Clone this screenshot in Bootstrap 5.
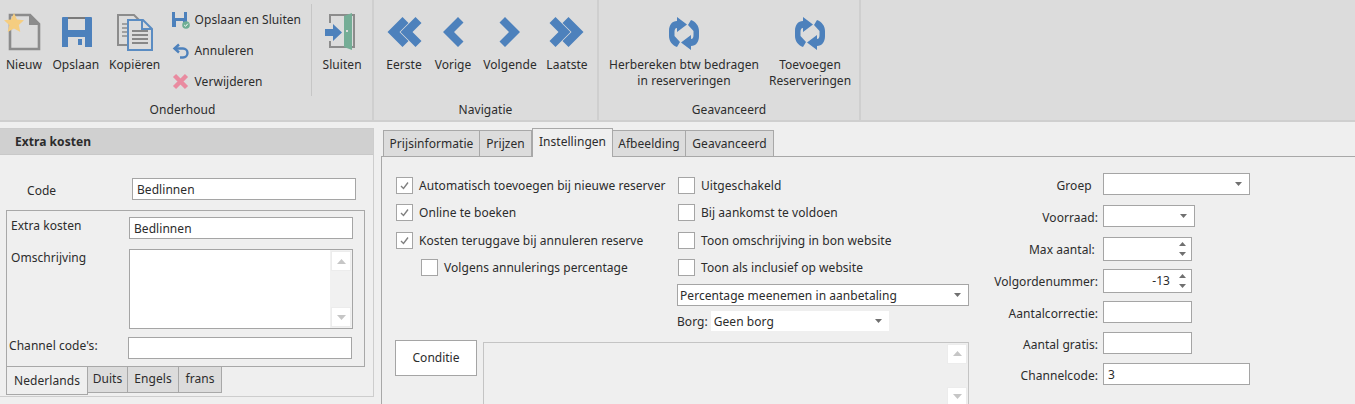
<!DOCTYPE html>
<html lang="nl">
<head>
<meta charset="UTF-8">
<title>Extra kosten</title>
<link href="https://cdn.jsdelivr.net/npm/bootstrap@5.3.3/dist/css/bootstrap.min.css" rel="stylesheet">
<style>
html, body { height: 404px; overflow: hidden; }
body { background: #efefef; color: #2c2c2c; font: 12px/16px "Noto Sans", "Liberation Sans", sans-serif; letter-spacing: .05px; }

/* ribbon */
.ribbon { height: 122px; background: #dcdcdc; border-bottom: 2px solid #cfcfcf; }
.rb-group { border-right: 2px solid #cfcfcf; }
.rb-items { height: 100px; }
.rb-title { height: 20px; line-height: 20px; text-align: center; }
.rb-onderhoud { padding-right: 7px; }
.rb-btn { height: 96px; text-align: center; white-space: nowrap; }
.rb-icon { height: 57px; }
.rb-stack { width: 146px; margin: 4px 0 0 10px; }
.rb-row { height: 31px; gap: 5px; }
.rb-sep { width: 1px; height: 92px; margin: 4px 0 0 -6px; background: #c6c6c6; }
.w-new { width: 48px; }
.w-save { width: 56px; }
.w-copy { width: 54px; margin-left: 4px; }
.w-close { width: 60px; }
.w-first { width: 44px; }
.w-prev { width: 54px; }
.w-next { width: 60px; }
.w-last { width: 54px; }
.w-calc { width: 170px; }
.w-add { width: 82px; }
.g-one { width: 374px; }
.g-two { width: 225px; }
.g-three { width: 262px; }

/* left panel */
.side { width: 374px; height: 269px; margin-top: 6px; border: 1px solid #cdcdcd; border-left: 0; }
.side-head { height: 26px; line-height: 25px; padding-left: 15px; background: #d0d0d0; border-bottom: 1px solid #c8c8c8; font-weight: 700; }
.fld { height: 22px; width: 224px; padding: 0 4px; border: 1px solid #a5a5a5; border-radius: 0; background: #fff; color: #2c2c2c; font-size: 12px; line-height: 20px; min-height: 0; letter-spacing: .05px; }
.code-row { margin-top: 23px; height: 22px; padding-left: 27px; }
.code-row label { width: 105px; line-height: 26px; }
.gbox { width: 359px; height: 157px; margin: 10px 0 0 6px; border: 1px solid #a8a8a8; padding: 6px 0 0 4px; }
.gbox label { width: 118px; }
.lbl-extra { padding-top: 1px; }
.lbl-memo { margin-top: 11px; }
.lbl-chan { margin-left: -2px; width: 119px !important; line-height: 18px; }
.memo { height: 80px; width: 224px; border: 1px solid #a5a5a5; background: #fff; margin-top: 10px; }
.sbar { width: 22px; background: #f1f1f1; padding: 1px; }
.sbar-btn { height: 20px; background: #fff; border: 1px solid #ececec; }
.lang-tabs { margin-left: 6px; border: 0; }
.lang-tabs .nav-link { height: 26px; width: 40px; padding: 0; text-align: center; line-height: 24px; color: #2c2c2c; background: #dcdcdc; border: 1px solid #a8a8a8; border-top: 0; border-left: 0; border-radius: 0; margin: 0; font-size: 12px; }
.lang-tabs .nav-item:nth-child(3) .nav-link { width: 51px; }
.lang-tabs .nav-item:nth-child(4) .nav-link { width: 43px; }
.lang-tabs .nav-link.active { height: 28px; width: 82px; background: #efefef; border: 1px solid #a8a8a8; border-top: 0; line-height: 27px; color: #2c2c2c; }

/* right panel */
.mainp { margin: 8px 0 0 7px; flex: 1; }
.main-tabs { height: 26px; padding-left: 2px; border: 0; }
.main-tabs .nav-link { height: 26px; margin: 0; padding: 0; text-align: center; line-height: 26px; color: #2c2c2c; font-size: 12px; background: #dcdcdc; border: 1px solid #a8a8a8; border-left: 0; border-bottom: 0; border-radius: 0; }
.main-tabs .nav-item:nth-child(1) .nav-link { width: 97px; border-left: 1px solid #a8a8a8; }
.main-tabs .nav-item:nth-child(2) .nav-link { width: 52px; }
.main-tabs .nav-item:nth-child(3) .nav-link { width: 81px; }
.main-tabs .nav-item:nth-child(4) .nav-link { width: 73px; }
.main-tabs .nav-item:nth-child(5) .nav-link { width: 88px; }
.main-tabs .nav-link.active { height: 29px; margin-top: -2px; background: #efefef; color: #2c2c2c; border: 1px solid #a8a8a8; border-bottom: 0; position: relative; z-index: 1; }
.page { height: 250px; border-top: 1px solid #a8a8a8; border-left: 1px solid #a8a8a8; padding: 20px 0 0 14px; }
.c-left { width: 574px; }
.c-one { width: 282px; }
.c-two { width: 292px; }
.chk { height: 27.4px; gap: 6px; white-space: nowrap; }
.chk span { margin-top: 1px; }
.chk .form-check-input { width: 17px; height: 17px; margin: 0; flex: none; border: 1px solid #a5a5a5; border-radius: 0; background-color: #fff; box-shadow: none; }
.chk .form-check-input:checked { background-color: #fff; border-color: #a5a5a5; background-size: 13px; background-image: url("data:image/svg+xml,%3Csvg xmlns='http://www.w3.org/2000/svg' viewBox='0 0 13 13'%3E%3Cpath d='M3 7l2.500 2.500L10 3.500' fill='none' stroke='%23808080' stroke-width='1.400'/%3E%3C/svg%3E"); }
.chk-sub { padding-left: 25px; }
.pick { height: 22px; min-height: 0; padding: 2px 2px 0; border: 1px solid #a5a5a5; border-radius: 0; color: #2c2c2c; font-size: 12px; line-height: 18px; letter-spacing: .05px; background-position: right 0 center; background-size: 20px 8px; background-image: url("data:image/svg+xml,%3Csvg xmlns='http://www.w3.org/2000/svg' viewBox='0 0 20 8'%3E%3Cpath d='M6 2h7l-3.500 4z' fill='%23707070'/%3E%3C/svg%3E"); box-shadow: none; }
.pick-wide { width: 292px; margin: -3px 0 0 -1px; }
.borg { margin: 5px 0 0 -1px; height: 20px; gap: 3px; }
.borg span { padding-top: 2px; }
.pick-flat { width: 178px; height: 20px; border: 0; padding-left: 3px; }
.cond-row { margin-top: 9px; }
.cond-btn { width: 82px; height: 36px; margin-left: -1px; padding: 0; background: #fff; color: #2c2c2c; font-size: 12px; border: 1px solid #a5a5a5; border-radius: 0; }
.cond-box { width: 486px; height: 67px; margin: 2px 0 0 6px; border: 1px solid #c4c4c4; }
.cond-box .sbar { background: transparent; }
.c-three { margin: -4px 0 0 18px; }
.rowf { margin-bottom: 10px; }
.rowf label { width: 110px; height: 22px; margin-right: 5px; text-align: right; white-space: nowrap; line-height: 26px; }
.rowf-8 { margin-bottom: 8px; }
.rowf-9 { margin-bottom: 9px; }
.w-a { width: 147px; }
.w-b { width: 92px; }
.w-c { width: 89px; }
.spin { height: 24px; width: 89px; background: #fff; border: 1px solid #a5a5a5; padding-right: 4px; line-height: 22px; text-align: right; }
.spin svg { margin-left: 8px; }
</style>
</head>
<body>

<!-- ribbon -->
<div class="ribbon d-flex">
  <div class="rb-group g-one">
    <div class="rb-items d-flex">
      <div class="rb-btn w-new d-flex flex-column align-items-center">
        <div class="rb-icon">
          <svg width="40" height="57" viewBox="0 0 40 57"><path d="M6 15h20l9 9v25H6z" fill="none" stroke="#8c8c8c" stroke-width="2.600"/><path d="M25 14v11h10z" fill="#8c8c8c"/><path d="M10 13l3 6.500 7 .8-5.200 4.700 1.500 7-6.300-3.600-6.300 3.600 1.500-7L0 20.300l7-.8z" fill="#f5cd80"/></svg>
        </div>
        <span>Nieuw</span>
      </div>
      <div class="rb-btn w-save d-flex flex-column align-items-center">
        <div class="rb-icon">
          <svg width="34" height="57" viewBox="0 0 34 57"><path d="M3 18a1 1 0 0 1 1-1h28a1 1 0 0 1 1 1v29H3z" fill="#4d81bc"/><path d="M9 17h17v13H9z" fill="#dcdcdc"/><path d="M9 17h17v2H9z" fill="#7a7a7a"/><path d="M9 37h17v10H9z" fill="#dcdcdc"/><path d="M19 39h4v6h-4z" fill="#4d81bc"/></svg>
        </div>
        <span>Opslaan</span>
      </div>
      <div class="rb-btn w-copy d-flex flex-column align-items-center">
        <div class="rb-icon">
          <svg width="38" height="57" viewBox="0 0 38 57"><path d="M2 15h16l6 6v24H2z" fill="none" stroke="#8c8c8c" stroke-width="2"/><path d="M6 24h10M6 28h10M6 32h10M6 36h10" stroke="#8c8c8c" stroke-width="1.500"/><path d="M12 20h15l9 9v21H12z" fill="#dcdcdc" stroke="#5b8cc2" stroke-width="2"/><path d="M26 20v9h10" fill="none" stroke="#5b8cc2" stroke-width="2"/><path d="M16 31h16M16 35h16M16 39h16M16 43h16" stroke="#6b6b6b" stroke-width="1.500"/></svg>
        </div>
        <span>Kopiëren</span>
      </div>
      <div class="rb-stack">
        <div class="rb-row d-flex align-items-center">
          <svg width="18" height="18" viewBox="0 0 18 18"><path d="M0 1h15v15H0z" fill="#4d81bc"/><path d="M3 1h9v6H3z" fill="#dcdcdc"/><path d="M4 10h7v6H4z" fill="#dcdcdc"/><circle cx="14" cy="14" r="3.800" fill="#6fae94"/><path d="M12.200 14l1.300 1.300 2.300-2.600" fill="none" stroke="#fff" stroke-width="1"/></svg>
          <span>Opslaan en Sluiten</span>
        </div>
        <div class="rb-row d-flex align-items-center">
          <svg width="18" height="18" viewBox="0 0 18 18"><path d="M7 2.500L2.500 6.500 7 10.500" fill="none" stroke="#4d81bc" stroke-width="2.400"/><path d="M3 6.500h8a4.500 4.500 0 0 1 0 9H8" fill="none" stroke="#4d81bc" stroke-width="2.400"/></svg>
          <span>Annuleren</span>
        </div>
        <div class="rb-row d-flex align-items-center">
          <svg width="18" height="18" viewBox="0 0 18 18"><path d="M2.500 2.500l12 12M14.500 2.500l-12 12" fill="none" stroke="#e98ba0" stroke-width="4.400"/></svg>
          <span>Verwijderen</span>
        </div>
      </div>
      <div class="rb-sep"></div>
      <div class="rb-btn w-close d-flex flex-column align-items-center">
        <div class="rb-icon">
          <svg width="34" height="57" viewBox="0 0 34 57"><path d="M5 23v-8h24v32H5v-6" fill="none" stroke="#8c8c8c" stroke-width="2"/><path d="M19 16l8-3v37l-8-3z" fill="#75ad96"/><path d="M21 30h2v2h-2z" fill="#dcdcdc"/><path d="M0 29h8v-5l9 8.500-9 8.500v-5H0z" fill="#4d81bc"/></svg>
        </div>
        <span>Sluiten</span>
      </div>
    </div>
    <div class="rb-title rb-onderhoud">Onderhoud</div>
  </div>

  <div class="rb-group g-two">
    <div class="rb-items d-flex ps-2">
      <div class="rb-btn w-first d-flex flex-column align-items-center">
        <div class="rb-icon"><svg width="36" height="57" viewBox="0 0 36 57"><path d="M1.500 32l15-15 6 6-9 9 9 9-6 6zM14.500 32l15-15 6 6-9 9 9 9-6 6z" fill="#4d81bc"/></svg></div>
        <span>Eerste</span>
      </div>
      <div class="rb-btn w-prev d-flex flex-column align-items-center">
        <div class="rb-icon"><svg width="22" height="57" viewBox="0 0 22 57"><path d="M1 32l15-15 5.500 5.500-9.500 9.500 9.500 9.500L16 47z" fill="#4d81bc"/></svg></div>
        <span>Vorige</span>
      </div>
      <div class="rb-btn w-next d-flex flex-column align-items-center">
        <div class="rb-icon"><svg width="22" height="57" viewBox="0 0 22 57"><path d="M21 32L6 17 .5 22.500 10 32 .5 41.500 6 47z" fill="#4d81bc"/></svg></div>
        <span>Volgende</span>
      </div>
      <div class="rb-btn w-last d-flex flex-column align-items-center">
        <div class="rb-icon"><svg width="36" height="57" viewBox="0 0 36 57"><path d="M34.500 32l-15-15-6 6 9 9-9 9 6 6zM21.500 32l-15-15-6 6 9 9-9 9 6 6z" fill="#4d81bc"/></svg></div>
        <span>Laatste</span>
      </div>
    </div>
    <div class="rb-title">Navigatie</div>
  </div>

  <div class="rb-group g-three">
    <div class="rb-items d-flex">
      <div class="rb-btn w-calc d-flex flex-column align-items-center">
        <div class="rb-icon"><svg width="30" height="57" viewBox="0 0 30 57"><path id="rf" d="M8 17l10 7.500L8 32v-4c-2 0-2.500 2-2.500 4v4l5.500 6-3 5c-5-2-8-6-8-11v-5c0-6 3-10 8-10z" fill="#4d81bc"/><use href="#rf" transform="rotate(180 15 33.500)"/></svg></div>
        <span>Herbereken btw bedragen<br>in reserveringen</span>
      </div>
      <div class="rb-btn w-add d-flex flex-column align-items-center">
        <div class="rb-icon"><svg width="30" height="57" viewBox="0 0 30 57"><use href="#rf"/><use href="#rf" transform="rotate(180 15 33.500)"/></svg></div>
        <span>Toevoegen<br>Reserveringen</span>
      </div>
    </div>
    <div class="rb-title">Geavanceerd</div>
  </div>
</div>

<div class="d-flex">
  <!-- left panel -->
  <div class="side">
    <div class="side-head">Extra kosten</div>
    <div class="code-row d-flex">
      <label>Code</label>
      <input class="fld" type="text" value="Bedlinnen">
    </div>
    <div class="gbox">
      <div class="d-flex">
        <label class="lbl-extra">Extra kosten</label>
        <input class="fld" type="text" value="Bedlinnen">
      </div>
      <div class="d-flex">
        <label class="lbl-memo">Omschrijving</label>
        <div class="memo d-flex justify-content-end">
          <div class="sbar d-flex flex-column justify-content-between">
            <div class="sbar-btn d-flex align-items-center justify-content-center"><svg width="9" height="5" viewBox="0 0 9 5"><path d="M4.500 0L9 5H0z" fill="#c6c6c6"/></svg></div>
            <div class="sbar-btn d-flex align-items-center justify-content-center"><svg width="9" height="5" viewBox="0 0 9 5"><path d="M4.500 5L9 0H0z" fill="#c6c6c6"/></svg></div>
          </div>
        </div>
      </div>
      <div class="d-flex mt-2">
        <label class="lbl-chan">Channel code's:</label>
        <input class="fld" type="text">
      </div>
    </div>
    <ul class="nav nav-tabs lang-tabs">
      <li class="nav-item"><a class="nav-link active" href="#">Nederlands</a></li>
      <li class="nav-item"><a class="nav-link" href="#">Duits</a></li>
      <li class="nav-item"><a class="nav-link" href="#">Engels</a></li>
      <li class="nav-item"><a class="nav-link" href="#">frans</a></li>
    </ul>
  </div>

  <!-- right panel -->
  <div class="mainp">
    <ul class="nav nav-tabs main-tabs">
      <li class="nav-item"><a class="nav-link" href="#">Prijsinformatie</a></li>
      <li class="nav-item"><a class="nav-link" href="#">Prijzen</a></li>
      <li class="nav-item"><a class="nav-link active" href="#">Instellingen</a></li>
      <li class="nav-item"><a class="nav-link" href="#">Afbeelding</a></li>
      <li class="nav-item"><a class="nav-link" href="#">Geavanceerd</a></li>
    </ul>
    <div class="page d-flex">
      <div class="c-left">
        <div class="d-flex">
          <div class="c-one">
            <div class="chk d-flex align-items-start"><input class="form-check-input" type="checkbox" checked><span>Automatisch toevoegen bij nieuwe reserver</span></div>
            <div class="chk d-flex align-items-start"><input class="form-check-input" type="checkbox" checked><span>Online te boeken</span></div>
            <div class="chk d-flex align-items-start"><input class="form-check-input" type="checkbox" checked><span>Kosten teruggave bij annuleren reserve</span></div>
            <div class="chk chk-sub d-flex align-items-start"><input class="form-check-input" type="checkbox"><span>Volgens annulerings percentage</span></div>
          </div>
          <div class="c-two">
            <div class="chk d-flex align-items-start"><input class="form-check-input" type="checkbox"><span>Uitgeschakeld</span></div>
            <div class="chk d-flex align-items-start"><input class="form-check-input" type="checkbox"><span>Bij aankomst te voldoen</span></div>
            <div class="chk d-flex align-items-start"><input class="form-check-input" type="checkbox"><span>Toon omschrijving in bon website</span></div>
            <div class="chk d-flex align-items-start"><input class="form-check-input" type="checkbox"><span>Toon als inclusief op website</span></div>
            <select class="form-select pick pick-wide"><option>Percentage meenemen in aanbetaling</option></select>
            <div class="borg d-flex align-items-center">
              <span>Borg:</span>
              <select class="form-select pick pick-flat"><option>Geen borg</option></select>
            </div>
          </div>
        </div>
        <div class="cond-row d-flex">
          <button class="btn cond-btn" type="button">Conditie</button>
          <div class="cond-box d-flex justify-content-end">
            <div class="sbar d-flex flex-column justify-content-between">
              <div class="sbar-btn d-flex align-items-center justify-content-center"><svg width="9" height="5" viewBox="0 0 9 5"><path d="M4.500 0L9 5H0z" fill="#c6c6c6"/></svg></div>
              <div class="sbar-btn d-flex align-items-center justify-content-center"><svg width="9" height="5" viewBox="0 0 9 5"><path d="M4.500 5L9 0H0z" fill="#c6c6c6"/></svg></div>
            </div>
          </div>
        </div>
      </div>
      <div class="c-three">
        <div class="rowf d-flex"><label>Groep&nbsp;&nbsp;</label><select class="form-select pick w-a"><option></option></select></div>
        <div class="rowf d-flex"><label>Voorraad:</label><select class="form-select pick w-b"><option></option></select></div>
        <div class="rowf rowf-8 d-flex"><label>Max aantal:&nbsp;</label>
          <div class="spin d-flex justify-content-end align-items-center"><svg width="9" height="16" viewBox="0 0 9 16"><path d="M4.500 1L8 5H1zM4.500 15L1 11h7z" fill="#707070"/></svg></div>
        </div>
        <div class="rowf rowf-8 d-flex"><label>Volgordenummer:</label>
          <div class="spin d-flex justify-content-end align-items-center"><span>-13</span><svg width="9" height="16" viewBox="0 0 9 16"><path d="M4.500 1L8 5H1zM4.500 15L1 11h7z" fill="#707070"/></svg></div>
        </div>
        <div class="rowf rowf-9 d-flex"><label>Aantalcorrectie:</label><input class="fld w-c" type="text"></div>
        <div class="rowf rowf-9 d-flex"><label>Aantal gratis:</label><input class="fld w-c" type="text"></div>
        <div class="rowf d-flex"><label>Channelcode:</label><input class="fld w-a" type="text" value="3"></div>
      </div>
    </div>
  </div>
</div>

<script src="https://cdn.jsdelivr.net/npm/bootstrap@5.3.3/dist/js/bootstrap.bundle.min.js"></script>
</body>
</html>
